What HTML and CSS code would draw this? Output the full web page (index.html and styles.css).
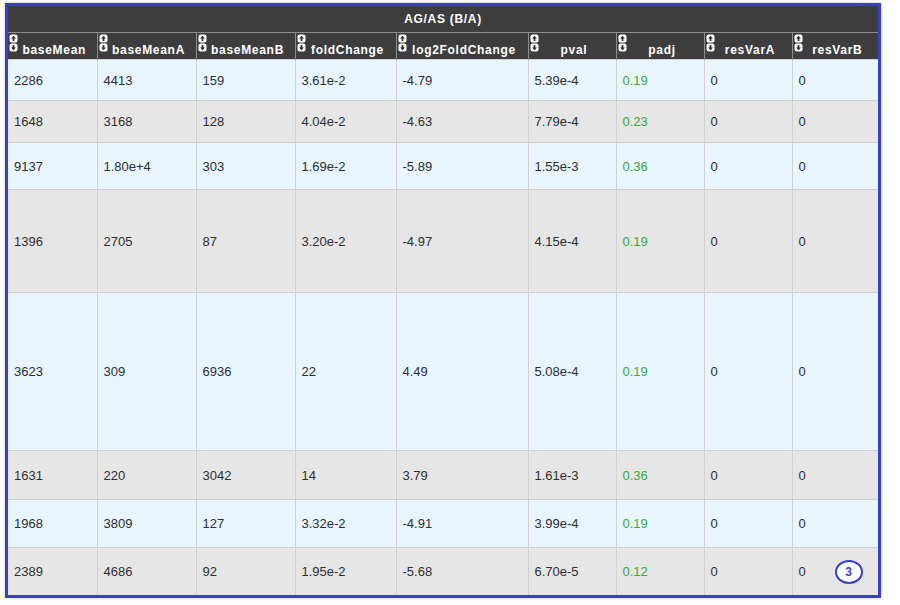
FILE: index.html
```html
<!DOCTYPE html>
<html lang="en">
<head>
  <meta charset="UTF-8" />
  <title>AG/AS (B/A)</title>
  <link rel="stylesheet" href="styles.css">
</head>
<body>
  <div class="frame">
    <table class="results">
      <colgroup>
        <col style="width: 89px">
        <col style="width: 99px">
        <col style="width: 99px">
        <col style="width: 101px">
        <col style="width: 132px">
        <col style="width: 88px">
        <col style="width: 88px">
        <col style="width: 88px">
        <col style="width: 86px">
      </colgroup>
      <thead>
        <tr class="title-row">
          <th colspan="9">AG/AS (B/A)</th>
        </tr>
        <tr class="head-row" id="headRow"></tr>
      </thead>
      <tbody id="recordsBody"></tbody>
    </table>
  </div>

  <script>
    const columns = ['baseMean', 'baseMeanA', 'baseMeanB', 'foldChange', 'log2FoldChange', 'pval', 'padj', 'resVarA', 'resVarB'];

    const rows = [
      { h: 41, v: ['2286', '4413', '159', '3.61e-2', '-4.79', '5.39e-4', '0.19', '0', '0'] },
      { h: 42, v: ['1648', '3168', '128', '4.04e-2', '-4.63', '7.79e-4', '0.23', '0', '0'] },
      { h: 47, v: ['9137', '1.80e+4', '303', '1.69e-2', '-5.89', '1.55e-3', '0.36', '0', '0'] },
      { h: 103, v: ['1396', '2705', '87', '3.20e-2', '-4.97', '4.15e-4', '0.19', '0', '0'] },
      { h: 158, v: ['3623', '309', '6936', '22', '4.49', '5.08e-4', '0.19', '0', '0'] },
      { h: 49, v: ['1631', '220', '3042', '14', '3.79', '1.61e-3', '0.36', '0', '0'] },
      { h: 48, v: ['1968', '3809', '127', '3.32e-2', '-4.91', '3.99e-4', '0.19', '0', '0'] },
      { h: 47, v: ['2389', '4686', '92', '1.95e-2', '-5.68', '6.70e-5', '0.12', '0', '0'] }
    ];

    const sortIcon = `<svg class="sort-icon" width="9" height="18" viewBox="0 0 9 18">
      <rect x="0.5" y="0.5" width="8" height="8" rx="2" fill="#fff"/>
      <path d="M4.5 1.8 L7 4.6 H5.4 V7 H3.6 V4.6 H2 Z" fill="#333"/>
      <rect x="0.5" y="9.5" width="8" height="8" rx="2" fill="#fff"/>
      <path d="M4.5 16.2 L7 13.4 H5.4 V11 H3.6 V13.4 H2 Z" fill="#333"/>
    </svg>`;

    const headRow = document.getElementById('headRow');
    columns.forEach(name => {
      const th = document.createElement('th');
      th.innerHTML = `${sortIcon}<span class="head-label">${name}</span>`;
      headRow.appendChild(th);
    });

    const body = document.getElementById('recordsBody');
    rows.forEach((row, i) => {
      const tr = document.createElement('tr');
      tr.className = i % 2 === 0 ? 'row-blue' : 'row-gray';
      tr.style.height = row.h + 'px';
      tr.innerHTML = row.v.map((val, c) => `<td class="${c === 6 ? 'padj' : ''}">${val}</td>`).join('');
      body.appendChild(tr);
    });

    const lastCell = body.lastElementChild.lastElementChild;
    lastCell.classList.add('has-badge');
    lastCell.innerHTML += '<span class="page-badge">3</span>';
  </script>
</body>
</html>
```

FILE: styles.css
```css
body {
  margin: 0;
  padding: 3px 0 0 5px;
  background-color: #ffffff;
  font-family: "Liberation Sans", Arial, sans-serif;
}

.frame {
  display: inline-block;
  border: 3px solid #3a3ecf;
  box-shadow: 0 0 3px rgba(0, 0, 0, 0.25);
}

.results {
  width: 870px;
  table-layout: fixed;
  border-collapse: collapse;
}

.results th {
  background-color: #3d3d3d;
  color: #ffffff;
  font-size: 12px;
  font-weight: bold;
  letter-spacing: 0.7px;
  line-height: 14px;
}

.title-row th {
  height: 26px;
  padding: 0;
  text-align: center;
  border-bottom: 1px solid #8c8c8c;
}

.head-row th {
  position: relative;
  height: 24px;
  padding: 0 0 2px;
  vertical-align: bottom;
  text-align: center;
  border-left: 1px solid #8c8c8c;
  border-right: 1px solid #8c8c8c;
  white-space: nowrap;
}

.head-row th:first-child {
  border-left: none;
}

.head-row th:last-child {
  border-right: none;
}

.sort-icon {
  position: absolute;
  left: 1px;
  top: 1px;
}

.head-label {
  display: inline-block;
  padding-left: 4px;
}

.results td {
  padding: 0 0 0 6px;
  font-size: 13px;
  color: #2e2e2e;
  border: 1px solid #d0d0d0;
  vertical-align: middle;
}

.results tr td:first-child {
  border-left: none;
}

.results tr td:last-child {
  border-right: none;
}

.results tbody tr:last-child td {
  border-bottom: none;
}

.row-blue {
  background-color: #e8f5fd;
}

.row-gray {
  background-color: #e6e6e6;
}

.results td.padj {
  color: #3aa83a;
}

.has-badge {
  position: relative;
}

.page-badge {
  position: absolute;
  left: 42px;
  top: 12px;
  width: 24px;
  height: 20px;
  border: 2px solid #3a3ecf;
  border-radius: 50%;
  background-color: #ffffff;
  color: #3a3ecf;
  font-size: 12px;
  font-weight: bold;
  line-height: 20px;
  text-align: center;
}
```
